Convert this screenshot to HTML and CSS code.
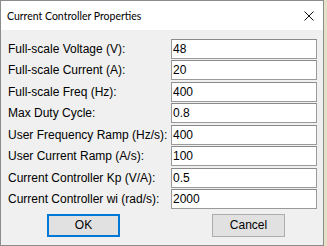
FILE: index.html
```html
<!DOCTYPE html>
<html lang="en">
<head>
    <meta charset="UTF-8">
    <title>Current Controller Properties</title>
    <link rel="stylesheet" href="styles.css">
</head>
<body>
    <div class="window">
        <header class="titlebar">
            <span class="title">Current Controller Properties</span>
            <svg class="close" width="10" height="10" viewBox="0 0 10 10">
                <path d="M0.5 0.5 L9.5 9.5 M9.5 0.5 L0.5 9.5" stroke="#111" stroke-width="1" fill="none"/>
            </svg>
        </header>
        <main class="content">
            <div class="fields">
                <label>Full-scale Voltage (V):</label>
                <input type="text" value="48">
                <label>Full-scale Current (A):</label>
                <input type="text" value="20">
                <label>Full-scale Freq (Hz):</label>
                <input type="text" value="400">
                <label>Max Duty Cycle:</label>
                <input type="text" value="0.8">
                <label>User Frequency Ramp (Hz/s):</label>
                <input type="text" value="400">
                <label>User Current Ramp (A/s):</label>
                <input type="text" value="100">
                <label>Current Controller Kp (V/A):</label>
                <input type="text" value="0.5">
                <label>Current Controller wi (rad/s):</label>
                <input type="text" value="2000">
            </div>
            <div class="buttons">
                <button class="btn default">OK</button>
                <button class="btn cancel">Cancel</button>
            </div>
        </main>
    </div>
</body>
</html>
```

FILE: styles.css
```css
body {
    margin: 0;
    padding: 0;
    background-color: #e4e2c4;
    font-family: "Liberation Sans", Arial, sans-serif;
}

.window {
    width: 322px;
    height: 244px;
    border: 1px solid #8c8c8c;
    background-color: #f0f0f0;
    display: flex;
    flex-direction: column;
}

.titlebar {
    height: 29px;
    background-color: #fff;
    display: flex;
    align-items: center;
    justify-content: space-between;
    padding: 0 9px 0 6px;
}

.title {
    font-family: Lato, sans-serif;
    font-size: 10.5px;
    color: #000;
}

.close {
    display: block;
    margin-top: 1px;
}

.content {
    padding: 9px 0 0 7px;
}

.fields {
    display: grid;
    grid-template-columns: 163px 146px;
    grid-auto-rows: 20px;
    row-gap: 1.43px;
    align-items: center;
}

label {
    font-size: 12px;
    color: #000;
    white-space: nowrap;
}

input {
    box-sizing: border-box;
    height: 20px;
    width: 146px;
    margin: 0;
    padding: 0 1px;
    border: 1px solid #9a9a9a;
    border-top-color: #8a8a8a;
    background: #fff;
    font-family: "Liberation Sans", Arial, sans-serif;
    font-size: 12px;
    color: #000;
    outline: none;
}

.buttons {
    display: flex;
    padding: 5px 0 0 39px;
    gap: 92px;
}

.btn {
    box-sizing: border-box;
    width: 73px;
    height: 23px;
    margin: 0;
    padding: 0;
    background-color: #e1e1e1;
    font-family: "Liberation Sans", Arial, sans-serif;
    font-size: 12px;
    color: #000;
    border: 1px solid #adadad;
}

.btn.default {
    border: 2px solid #0078d7;
}
```
